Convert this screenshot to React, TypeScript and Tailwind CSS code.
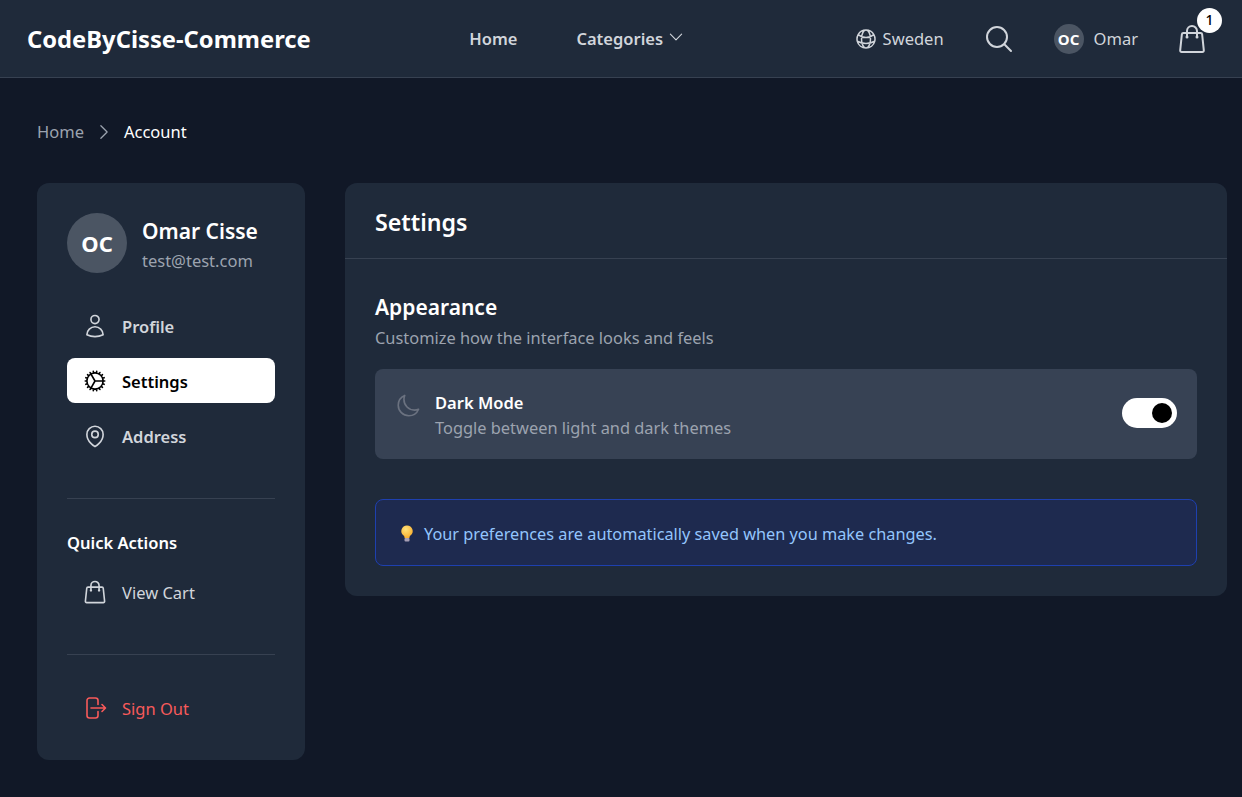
import {
  HiOutlineChevronDown,
  HiOutlineChevronRight,
  HiOutlineCog,
  HiOutlineGlobeAlt,
  HiOutlineMagnifyingGlass,
  HiOutlineMapPin,
  HiOutlineMoon,
  HiOutlineShoppingBag,
  HiOutlineUser,
} from "react-icons/hi2";

function SignOutIcon() {
  return (
    <svg viewBox="0 0 26 26" fill="none" stroke="currentColor" strokeWidth={1.6} strokeLinecap="round" strokeLinejoin="round" className="size-[26px]">
      <path d="M16 9.5V5.5A2.5 2.5 0 0 0 13.5 3H7.5A2.5 2.5 0 0 0 5 5.5v15A2.5 2.5 0 0 0 7.5 23h6a2.5 2.5 0 0 0 2.5-2.5v-4" />
      <path d="M9 13h14M20 9.5l3.5 3.5-3.5 3.5" />
    </svg>
  );
}

function Bulb() {
  return (
    <svg viewBox="0 0 14 18" className="mr-2.5 h-[18px] w-[14px] shrink-0">
      <defs>
        <radialGradient id="bulb" cx="0.4" cy="0.3" r="0.8">
          <stop offset="0" stopColor="#ffe27a" />
          <stop offset="1" stopColor="#f9a825" />
        </radialGradient>
      </defs>
      <path d="M7 .5A5.6 5.6 0 0 0 3.6 10.6c.7.6 1 1.4 1 2.4h4.8c0-1 .3-1.8 1-2.4A5.6 5.6 0 0 0 7 .5z" fill="url(#bulb)" />
      <rect x="4.5" y="13" width="5" height="3.5" rx="1" fill="#a79fb5" />
    </svg>
  );
}

function NavItem({ icon, label, active, tone }: { icon: React.ReactNode; label: string; active?: boolean; tone?: string }) {
  return (
    <div
      className={`flex h-[45px] items-center gap-[14px] rounded-lg px-[15px] text-[16.5px] ${
        active ? "bg-white font-semibold text-black" : tone ?? "font-semibold text-[#d1d5db]"
      }`}
    >
      {icon}
      <span className="pt-0.5">{label}</span>
    </div>
  );
}

export default function App() {
  return (
    <div className="min-h-[797px] bg-[#111827] font-['Noto_Sans',sans-serif] leading-6 text-white">
      <header className="flex h-[78px] items-center justify-between border-b border-[#374151] bg-[#1f2a3a] pl-[27px] pr-[34px]">
        <span className="text-[23.75px] font-bold">CodeByCisse-Commerce</span>
        <nav className="mr-[10px] flex items-center gap-[59px] text-[16.5px] font-semibold text-[#d1d5db]">
          <span>Home</span>
          <span className="flex items-center gap-1">
            Categories <HiOutlineChevronDown className="size-[18px] -translate-y-0.5" />
          </span>
        </nav>
        <div className="flex items-center text-[16.5px] text-[#d1d5db]">
          <span className="flex items-center gap-[5px]">
            <HiOutlineGlobeAlt className="size-6" /> Sweden
          </span>
          <HiOutlineMagnifyingGlass className="ml-[39px] size-8" />
          <span className="ml-[39px] flex items-center gap-2.5">
            <span className="flex size-[30px] items-center justify-center rounded-full bg-[#4b5563] text-[15px] font-bold text-white">OC</span>
            Omar
          </span>
          <span className="relative ml-[38px]">
            <HiOutlineShoppingBag className="size-8" />
            <span className="absolute -right-[14px] -top-[15px] flex size-[25px] items-center justify-center rounded-full bg-white text-sm font-medium text-black">1</span>
          </span>
        </div>
      </header>

      <main className="pl-[37px] pr-[15px]">
        <div className="flex h-[105px] items-center gap-2.5 pt-0.5 text-[16.5px]">
          <span className="text-[#9ca3af]">Home</span>
          <HiOutlineChevronRight className="size-5 text-[#9ca3af]" />
          <span>Account</span>
        </div>

        <div className="flex items-start gap-10">
          <aside className="w-[268px] shrink-0 rounded-xl bg-[#1f2a3a] p-[30px]">
            <div className="flex items-center gap-[15px]">
              <div className="flex size-[60px] items-center justify-center rounded-full bg-[#4b5563] text-[22px] font-bold">OC</div>
              <div className="pt-1">
                <div className="text-[21px] font-semibold leading-[28px]">Omar Cisse</div>
                <div className="mt-1 text-[16.5px] text-[#9ca3af]">test@test.com</div>
              </div>
            </div>
            <div className="mt-[30px] flex flex-col gap-2.5">
              <NavItem icon={<HiOutlineUser className="size-[26px]" />} label="Profile" />
              <NavItem icon={<HiOutlineCog className="size-[26px]" />} label="Settings" active />
              <NavItem icon={<HiOutlineMapPin className="size-[26px]" />} label="Address" />
            </div>
            <div className="mt-[40px] border-t border-[#374151] pt-[32px]">
              <div className="mb-[14px] text-[16.5px] font-semibold">Quick Actions</div>
              <NavItem icon={<HiOutlineShoppingBag className="size-[26px]" />} label="View Cart" tone="font-normal text-[#d1d5db]" />
            </div>
            <div className="mt-[40px] border-t border-[#374151] pt-[30px]">
              <NavItem icon={<SignOutIcon />} label="Sign Out" tone="font-normal text-[#f85a5a]" />
            </div>
          </aside>

          <section className="flex-1 rounded-xl bg-[#1f2a3a]">
            <div className="flex h-[76px] items-center border-b border-[#374151] px-[30px] pt-0.5 text-[23.2px] font-semibold">Settings</div>
            <div className="p-[30px]">
              <h2 className="pt-0.5 text-[21px] font-semibold leading-8">Appearance</h2>
              <p className="mt-[3px] text-[16.4px] text-[#9ca3af]">Customize how the interface looks and feels</p>
              <div className="mt-[19px] flex h-[90px] items-center justify-between rounded-lg bg-[#374254] px-5">
                <div className="flex items-center gap-[14px]">
                  <HiOutlineMoon className="size-[26px] -translate-y-2 text-[#6b7280]" />
                  <div className="pt-0.5">
                    <div className="text-[16.5px] font-semibold leading-6">Dark Mode</div>
                    <div className="mt-px text-[16.4px] leading-6 text-[#9ca3af]">Toggle between light and dark themes</div>
                  </div>
                </div>
                <div className="flex h-[30px] w-[55px] -translate-y-px items-center justify-end rounded-full bg-white px-[5px]">
                  <span className="size-5 rounded-full bg-black" />
                </div>
              </div>
              <div className="mt-10 flex h-[67px] items-center rounded-lg border border-[#1e40af] bg-[#1e2a4f] pl-6 pt-0.5 text-[16.3px] text-[#93c5fd]">
                <Bulb />
                Your preferences are automatically saved when you make changes.
              </div>
            </div>
          </section>
        </div>
      </main>
    </div>
  );
}
